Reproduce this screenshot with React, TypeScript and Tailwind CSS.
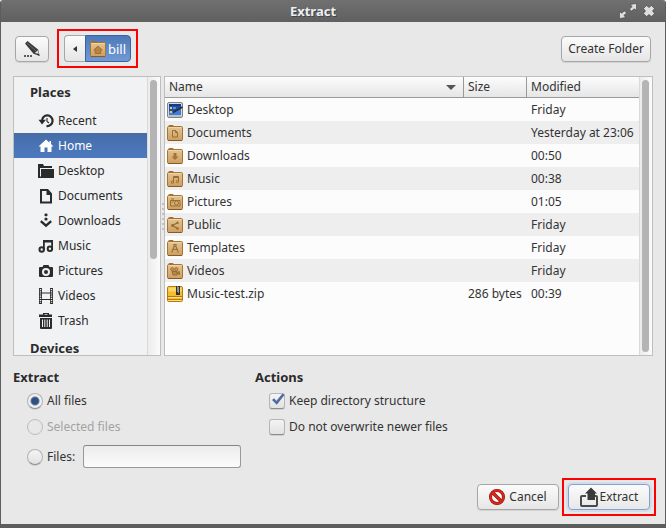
import React, { useState } from "react";

type PlaceName = "recent" | "home" | "desktop" | "documents" | "downloads" | "music" | "pictures" | "videos" | "trash";

const places: { label: string; icon: PlaceName }[] = [
  { label: "Recent", icon: "recent" },
  { label: "Home", icon: "home" },
  { label: "Desktop", icon: "desktop" },
  { label: "Documents", icon: "documents" },
  { label: "Downloads", icon: "downloads" },
  { label: "Music", icon: "music" },
  { label: "Pictures", icon: "pictures" },
  { label: "Videos", icon: "videos" },
  { label: "Trash", icon: "trash" },
];

const placeShapes: Record<PlaceName, React.ReactNode> = {
  recent: (
    <>
      <path d="M4 8A5.300 5.300 0 1 1 8.500 13" fill="none" stroke="currentColor" strokeWidth="2.200" />
      <path d="M0.500 6.800h7.500L4 11.500z" />
      <path d="M9 5v3.500l2 1.500" fill="none" stroke="currentColor" strokeWidth="1.100" />
    </>
  ),
  home: <path d="M8 1.500 0.500 8.500h2V14H6.500V9.500h3V14h4V8.500h2L13 6V3h-1.500v1.700z" />,
  desktop: (
    <>
      <path d="M0 1h5l1 2h8v2H2v9H0z" />
      <path d="M3 6h13v9H0V8h1.500v5.500H3z" />
    </>
  ),
  documents: <path fillRule="evenodd" d="M2 1h8l4 4.500V15.500H2zM4 3v10.500h8V7H8.500V3z" />,
  downloads: (
    <>
      <rect x="6.500" y="0.500" width="3" height="2.800" rx="1" />
      <rect x="6.500" y="4.800" width="3" height="2.800" rx="1" />
      <path d="M2.800 8.200 8 12.700l5.200-4.500" fill="none" stroke="currentColor" strokeWidth="2.400" />
    </>
  ),
  music: (
    <>
      <path d="M5 2h10v2.500H5z" />
      <path d="M5 2h1.800v10H5zM13.200 2H15v9h-1.800z" />
      <circle cx="3.700" cy="11.500" r="2.200" fill="none" stroke="currentColor" strokeWidth="2" />
      <circle cx="11.900" cy="10.700" r="2.200" fill="none" stroke="currentColor" strokeWidth="2" />
    </>
  ),
  pictures: (
    <path
      fillRule="evenodd"
      d="M5.500 2h5l1 2H14a1 1 0 0 1 1 1v8a1 1 0 0 1-1 1H2a1 1 0 0 1-1-1V5a1 1 0 0 1 1-1h2.500zM8 5a4 4 0 1 0 0 8 4 4 0 0 0 0-8zM8 7a2 2 0 1 1 0 4 2 2 0 0 1 0-4z"
    />
  ),
  videos: (
    <>
      <path d="M2.500 0v16M13.500 0v16" stroke="currentColor" strokeWidth="3" />
      <path d="M2.500 1v14M13.500 1v14" stroke="#f1f2f4" strokeWidth="1.400" strokeDasharray="1.200 1" />
      <path d="M3.500 5h9M3.500 11.500h9" stroke="currentColor" strokeWidth="1.200" />
    </>
  ),
  trash: (
    <>
      <path d="M5 0h6v1.500h3V4H1V1.500h4zM6.500 1v.8h3V1z" fillRule="evenodd" />
      <path
        fillRule="evenodd"
        d="M2 5h12v10a1 1 0 0 1-1 1H3a1 1 0 0 1-1-1zM4 6.500V14h1V6.500zM6.300 6.500V14h1V6.500zM8.700 6.500V14h1V6.500zM11 6.500V14h1V6.500z"
      />
    </>
  ),
};

function PlaceIcon({ name }: { name: PlaceName }) {
  return (
    <svg className="size-4 shrink-0" viewBox="0 0 16 16" fill="currentColor" aria-hidden="true">
      {placeShapes[name]}
    </svg>
  );
}

type FolderGlyph = "home" | "document" | "down" | "music" | "camera" | "share" | "compass" | "film";

const glyphs: Record<FolderGlyph, React.ReactNode> = {
  home: <path d="M8 5 3.800 9h1.400v3.500h5.600V9h1.400z" fill="#b98440" stroke="#946022" strokeWidth="0.700" />,
  document: <path d="M5.500 5.500h3l2 2v4.500h-5zM8.500 5.500v2h2" fill="none" stroke="#9c6c2e" />,
  down: <path d="M6.500 5h3v3.500h2L8 12 4.500 8.500h2z" fill="#a87436" />,
  music: (
    <>
      <path d="M6.500 11V5.500h5V10M6.500 6.500h5" fill="none" stroke="#9c6c2e" />
      <circle cx="5.500" cy="11.200" r="1.200" fill="none" stroke="#9c6c2e" />
      <circle cx="10.500" cy="10.500" r="1.200" fill="none" stroke="#9c6c2e" />
    </>
  ),
  camera: (
    <>
      <path d="M3.500 6.500h9.500v5.500H3.500zM4 5h3" fill="none" stroke="#9c6c2e" />
      <circle cx="9.500" cy="9" r="2" fill="none" stroke="#9c6c2e" />
      <rect x="4.500" y="7.500" width="2" height="1" fill="#9c6c2e" />
    </>
  ),
  share: (
    <>
      <path d="M10.500 5.800 5.500 8.500l5 3" fill="none" stroke="#9c6c2e" strokeWidth="1.300" />
      <circle cx="10.500" cy="5.800" r="1.200" fill="#9c6c2e" />
      <circle cx="5.500" cy="8.500" r="1.400" fill="#9c6c2e" />
      <circle cx="10.500" cy="11.500" r="1.200" fill="#9c6c2e" />
    </>
  ),
  compass: (
    <path d="M7 4.500h2v2H7zM7 6.500 4.800 12.500M9 6.500l2.200 6M5 10q3-1.500 6 0" fill="none" stroke="#9c6c2e" strokeWidth="1.100" />
  ),
  film: (
    <>
      <circle cx="5.300" cy="6.300" r="1.600" fill="#c79a5c" stroke="#9c6c2e" />
      <circle cx="9.300" cy="6.300" r="1.600" fill="#c79a5c" stroke="#9c6c2e" />
      <path d="M5 8.500h5v3.500H6zM10 9.500l2.500-1v3l-2.500-1z" fill="#b98848" stroke="#9c6c2e" />
    </>
  ),
};

function FolderIcon({ glyph }: { glyph: FolderGlyph }) {
  return (
    <svg className="size-4 shrink-0" viewBox="0 0 16 16" aria-hidden="true">
      <defs>
        <linearGradient id={`folder-${glyph}`} x1="0" y1="0" x2="0" y2="1">
          <stop offset="0" stopColor="#e3c594" />
          <stop offset="1" stopColor="#cb9f62" />
        </linearGradient>
      </defs>
      <path d="M1.500 3V1.500q0-1 1-1H6l1 1.500" fill="#c79658" stroke="#a36b2b" />
      <rect x="0.500" y="1.500" width="15" height="14" rx="1.200" fill={`url(#folder-${glyph})`} stroke="#a8722f" />
      <path d="M1.500 2.500h13" stroke="#ecd5ac" />
      <path d="M1 15.500h14" stroke="#8a5a20" />
      {glyphs[glyph]}
    </svg>
  );
}

function DesktopIcon() {
  return (
    <svg className="size-4 shrink-0" viewBox="0 0 16 16" aria-hidden="true">
      <rect x="0.500" y="0.500" width="15" height="15" rx="1.500" fill="#d6d8dc" stroke="#7e8187" />
      <rect x="2" y="2" width="12" height="11" fill="#1b4fa8" />
      <path d="M2 9q6 2 12-3v7H2z" fill="#3d7fd8" />
      <path d="M2 2h12v2H2z" fill="#123a86" />
      <path d="M3 5h2v2H3zM3 9h2v2H3z" fill="#f0c860" />
      <path d="M6 6h3" stroke="#a9c6f2" />
      <path d="M6 10.500 15.500 5" stroke="#2d2d2d" strokeWidth="1.500" />
      <path d="M2 14h12" stroke="#a4a7ad" />
    </svg>
  );
}

function ZipIcon() {
  return (
    <svg className="size-4 shrink-0" viewBox="0 0 16 16" aria-hidden="true">
      <rect x="0.500" y="0.500" width="15" height="15" rx="1.200" fill="#f4bd2e" stroke="#b9780e" />
      <path d="M1.500 1.500h13v4h-13z" fill="#fbd968" />
      <path d="M1 10.500h14M1 13.500h14" stroke="#b9780e" />
      <path d="M1.500 11.500h13M1.500 14.500h13" stroke="#fbe08a" />
      <path d="M9 0h4v9H9z" fill="#33312b" />
      <path d="M10.500 0.500v6M11.500 1.500v6" stroke="#f2f2f2" strokeDasharray="1 1" />
    </svg>
  );
}

const files: { name: string; icon: React.ReactNode; size: string; modified: string }[] = [
  { name: "Desktop", icon: <DesktopIcon />, size: "", modified: "Friday" },
  { name: "Documents", icon: <FolderIcon glyph="document" />, size: "", modified: "Yesterday at 23:06" },
  { name: "Downloads", icon: <FolderIcon glyph="down" />, size: "", modified: "00:50" },
  { name: "Music", icon: <FolderIcon glyph="music" />, size: "", modified: "00:38" },
  { name: "Pictures", icon: <FolderIcon glyph="camera" />, size: "", modified: "01:05" },
  { name: "Public", icon: <FolderIcon glyph="share" />, size: "", modified: "Friday" },
  { name: "Templates", icon: <FolderIcon glyph="compass" />, size: "", modified: "Friday" },
  { name: "Videos", icon: <FolderIcon glyph="film" />, size: "", modified: "Friday" },
  { name: "Music-test.zip", icon: <ZipIcon />, size: "286 bytes", modified: "00:39" },
];

const buttonStyle =
  "flex h-[26px] items-center justify-center rounded border border-[#a6a6a6] bg-linear-to-b from-[#fbfbfb] to-[#e6e6e6] shadow-[0_1px_1px_#d2d2d2]";

const toggleStyle =
  "peer size-4 shrink-0 appearance-none border border-[#b4b4b4] border-b-[#8c8c8c] bg-linear-to-b from-[#f4f4f4] to-[#e2e2e2] shadow-[0_1px_0_#cfcfcf]";

const headingStyle = "text-[13px] font-bold text-[#2b2b2b]";

function TitleBar() {
  return (
    <header className="grid h-[22px] shrink-0 grid-cols-[1fr_auto_1fr] items-center bg-linear-to-b from-[#707070] to-[#606060] text-[#eee]">
      <h1 className="col-start-2 pr-10 text-[13px] font-bold text-shadow-[1px_1px_0_#3d4654]">Extract</h1>
      <div className="flex items-center justify-end gap-1.5 pr-2.5">
        <button type="button" aria-label="Maximize">
          <svg className="h-4 w-[18px]" viewBox="0 0 18 16" aria-hidden="true">
            <path
              d="M17.500 0.500v7l-2.200-1.700-2.800 2.300L10.400 6l2.800-2.400L11 1.500zM0.500 15.500v-7l2.200 1.700 2.800-2.300L7.600 10l-2.800 2.400L7 14.500z"
              fill="#dedede"
              stroke="#404040"
              strokeWidth="0.600"
            />
          </svg>
        </button>
        <button type="button" aria-label="Close">
          <svg className="size-3" viewBox="0 0 12 12" aria-hidden="true">
            <path
              d="M3.500.5 6 2.500 8.500.5l3 3L9.500 6l2 2.500-3 3L6 9.500l-2.500 2-3-3L2.500 6l-2-2.500z"
              fill="#dedede"
              stroke="#404040"
              strokeWidth="0.600"
            />
          </svg>
        </button>
      </div>
    </header>
  );
}

function Toolbar() {
  return (
    <div className="flex items-center pt-[7px] pr-[14px] pb-2 pl-[14px]">
      <button type="button" aria-label="Type a file name" className={`${buttonStyle} w-[34px]`}>
        <svg className="size-[18px]" viewBox="0 0 18 18" aria-hidden="true">
          <path d="M2 3.500 4.500 1 15 9.500l1.800 6.500-6.300-2.300z" fill="#3a3a3a" />
          <path d="m4 3 9 8" stroke="#6e6e6e" />
          <path d="m11.800 13 3-2.800 1 3.800z" fill="#dedede" />
          <path d="m14.800 13.500 1.500 2-2.300-.8z" fill="#2b2b2b" />
          <path d="M1 16h2M4 16h2M7 16h2" stroke="#2b2b2b" strokeWidth="1.500" />
        </svg>
      </button>
      <div className="ml-2 flex border-2 border-[#fa0202] px-[5px] py-1">
        <button
          type="button"
          aria-label="Back"
          className="flex h-[27px] w-[21px] items-center justify-center rounded-l border border-r-0 border-[#a6a6a6] bg-linear-to-b from-[#fbfbfb] to-[#e6e6e6]"
        >
          <svg className="h-1.5 w-1" viewBox="0 0 4 6" aria-hidden="true">
            <path d="M4 0v6L0 3z" fill="#333" />
          </svg>
        </button>
        <button
          type="button"
          className="flex h-[27px] w-[46px] items-center gap-0.5 rounded-r border border-[#3d639e] bg-linear-to-b from-[#4e79b8] to-[#7099d6] px-1 text-[13px] text-white"
        >
          <FolderIcon glyph="home" />
          bill
        </button>
      </div>
      <button type="button" className={`${buttonStyle} ml-auto w-[90px]`}>
        Create Folder
      </button>
    </div>
  );
}

function PlacesPanel() {
  const [current, setCurrent] = useState("Home");
  return (
    <aside className="flex w-[148px] shrink-0 border border-[#bebebe] bg-[#f1f2f4]">
      <nav className="min-w-0 grow overflow-y-auto [scrollbar-width:none]">
        <h2 className={`${headingStyle} pl-4 leading-[31px]`}>Places</h2>
        {places.map(({ label, icon }) => (
          <button
            key={label}
            type="button"
            onClick={() => setCurrent(label)}
            className={`flex h-[25px] w-full items-center gap-1 pl-6 ${
              current === label ? "bg-linear-to-b from-[#466da8] to-[#4c79bf] text-white" : "text-[#2b2b2b]"
            }`}
          >
            <PlaceIcon name={icon} />
            {label}
          </button>
        ))}
        <h2 className={`${headingStyle} pl-4 leading-[31px]`}>Devices</h2>
      </nav>
      <div className="w-[13px] shrink-0 border-l border-[#dadada] bg-linear-to-r from-[#ececec] to-[#fbfbfb] px-0.5 pt-[3px]">
        <div className="h-[65%] w-[7px] rounded-full bg-[#b4b4b4]" />
      </div>
    </aside>
  );
}

function FileTable() {
  const head = "h-[21px] border-b border-[#999] bg-linear-to-b from-[#fcfcfc] to-[#e6e6e6] px-1 text-left font-normal";
  return (
    <section className="flex min-w-0 grow border border-[#bebebe] bg-[#fcfcfc]">
      <div className="min-w-0 grow overflow-hidden">
        <table className="w-full table-fixed border-separate border-spacing-0">
          <thead>
            <tr>
              <th className={`${head} border-r`}>
                <div className="flex items-center justify-between pr-[3px]">
                  Name
                  <svg className="h-[5px] w-2.5" viewBox="0 0 10 5" aria-hidden="true">
                    <path d="M0 0h10L5 5z" fill="#555" />
                  </svg>
                </div>
              </th>
              <th className={`${head} w-[63px] border-r`}>Size</th>
              <th className={`${head} w-[112px]`}>Modified</th>
            </tr>
          </thead>
          <tbody>
            {files.map(({ name, icon, size, modified }) => (
              <tr key={name} className="even:bg-[#eee]">
                <td className="h-[23px] px-0.5 py-0">
                  <div className="flex items-center gap-1">
                    {icon}
                    {name}
                  </div>
                </td>
                <td className="px-1 py-0 whitespace-nowrap">{size}</td>
                <td className="px-1 py-0 whitespace-nowrap">{modified}</td>
              </tr>
            ))}
          </tbody>
        </table>
      </div>
      <div className="w-[13px] shrink-0 border-l border-[#dadada] bg-linear-to-r from-[#ececec] to-[#fbfbfb] px-0.5 py-[3px]">
        <div className="h-full w-[7px] rounded-full bg-[#b4b4b4]" />
      </div>
    </section>
  );
}

function Options() {
  const radio = `${toggleStyle} rounded-full disabled:border-[#bcbcbc] disabled:bg-none disabled:shadow-none checked:bg-[radial-gradient(circle,#2f4f80_0_3px,#5b7aa8_4px,#efefef_5px)]`;
  return (
    <div className="flex h-[122px] shrink-0 pl-3">
      <fieldset className="w-[242px] shrink-0">
        <legend className={`${headingStyle} pt-3 leading-[18px]`}>Extract</legend>
        <div className="flex flex-col pt-[2px] pl-[14px]">
          <label className="flex h-[26px] items-center gap-1">
            <input type="radio" name="scope" defaultChecked className={radio} />
            All files
          </label>
          <label className="flex h-[26px] items-center gap-1 text-[#a3a3a3]">
            <input type="radio" name="scope" disabled className={radio} />
            Selected files
          </label>
          <div className="flex h-[33px] items-center">
            <label className="flex items-center gap-1">
              <input type="radio" name="scope" className={radio} />
              Files:
            </label>
            <input
              type="text"
              aria-label="Files pattern"
              className="mr-[14px] ml-auto h-[23px] w-[158px] rounded-[3px] border border-[#999] border-t-[#858585] bg-linear-to-b from-[#ececec] to-[#fcfcfc] px-1"
            />
          </div>
        </div>
      </fieldset>
      <fieldset>
        <legend className={`${headingStyle} pt-3 leading-[18px]`}>Actions</legend>
        <div className="flex flex-col pt-[2px] pl-[14px]">
          {["Keep directory structure", "Do not overwrite newer files"].map((text, i) => (
            <label key={text} className="relative flex h-[26px] items-center gap-1">
              <input type="checkbox" defaultChecked={i === 0} className={`${toggleStyle} rounded-[3px]`} />
              <svg className="absolute top-[5px] left-0 hidden size-4 peer-checked:block" viewBox="0 0 16 16" aria-hidden="true">
                <path d="m3 7 2.200-1.800L7.300 8 13.500 0.500 15.500 2 7.800 11.800z" fill="#4a6c9f" />
              </svg>
              {text}
            </label>
          ))}
        </div>
      </fieldset>
    </div>
  );
}

function Footer() {
  return (
    <footer className="flex shrink-0 items-center justify-end gap-[3px] pr-[9px] pb-2">
      <button type="button" className={`${buttonStyle} w-[82px] gap-1`}>
        <svg className="size-4" viewBox="0 0 16 16" aria-hidden="true">
          <circle cx="8" cy="8" r="6.500" fill="#f6f6f6" stroke="#8c1208" strokeWidth="3" />
          <path d="m3.500 3.500 9 9" stroke="#8c1208" strokeWidth="3.200" />
          <circle cx="8" cy="8" r="6.500" fill="none" stroke="#d9281c" strokeWidth="2" />
          <path d="m3.500 3.500 9 9" stroke="#d9281c" strokeWidth="2.200" />
        </svg>
        Cancel
      </button>
      <div className="border-2 border-[#fa0202] px-1 py-1">
        <button
          type="submit"
          className="flex h-[26px] w-[82px] items-center justify-center gap-[2px] rounded border border-[#85a2cf] bg-linear-to-b from-[#fbfbfb] to-[#e8e8e8] shadow-[0_0_0_2px_#d3dcea]"
        >
          <svg className="h-5 w-[18px]" viewBox="0 0 18 20" aria-hidden="true">
            <path d="M6 9H2q-1 0-1 1v8q0 1 1 1h14q1 0 1-1v-8q0-1-1-1h-1" fill="none" stroke="#4a4a4a" strokeWidth="2" />
            <path d="M11 0.500 17 6.500h-2V13H7.500V6.500H5z" fill="#3a3a3a" />
          </svg>
          Extract
        </button>
      </div>
    </footer>
  );
}

export default function App() {
  return (
    <main className="flex h-screen flex-col overflow-hidden rounded-t-[3px] border-x border-b-4 border-[#5c5e5c] bg-[#e8e8e8] font-['Noto_Sans',sans-serif] text-[12px] leading-4 text-[#333]">
      <TitleBar />
      <Toolbar />
      <div className="flex min-h-0 grow pr-3 pl-3">
        <PlacesPanel />
        <div className="flex w-[3px] shrink-0 flex-col items-center justify-center gap-[3px]">
          {[0, 1, 2, 3, 4, 5].map((n) => (
            <span key={n} className="size-[2px] rounded-full bg-[#b4b4b4]" />
          ))}
        </div>
        <FileTable />
      </div>
      <Options />
      <Footer />
    </main>
  );
}
